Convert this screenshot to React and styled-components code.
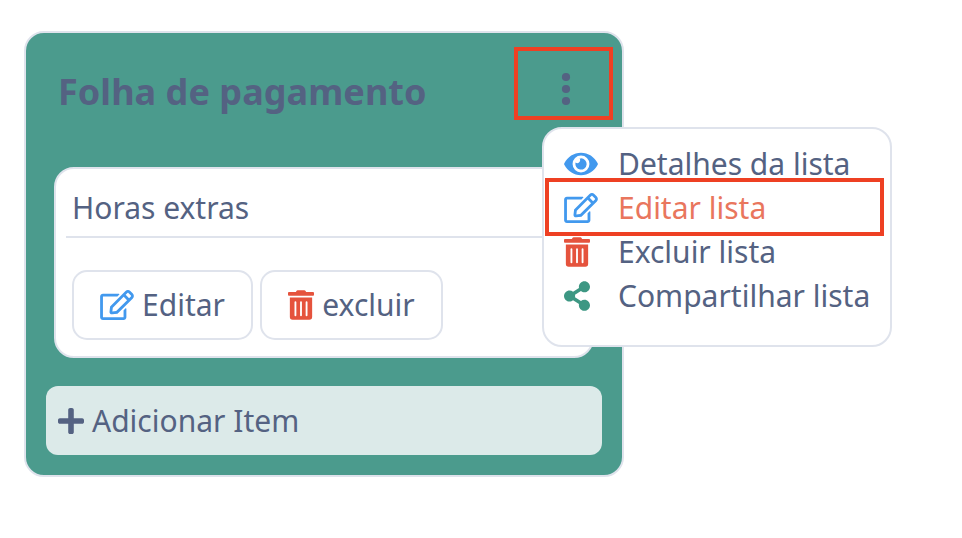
import React from "react";
import styled, { createGlobalStyle } from "styled-components";
import { FaEye, FaRegEdit, FaTrashAlt, FaShareAlt, FaPlus } from "react-icons/fa";

const ink = "#546282";
const line = "#dfe3ec";
const blue = "#4299ee";
const red = "#e5533d";
const green = "#3d9783";

const GlobalStyle = createGlobalStyle`
  *, *::before, *::after { box-sizing: border-box; }
  html, body { margin: 0; background: #fff; }
  body { font-family: "Noto Sans", sans-serif; font-size: 30px; color: ${ink}; overflow: hidden; }
`;

const Page = styled.main`
  position: relative;
  width: 962px;
  height: 538px;
  padding: 31px 24px;
`;

const Icon = styled.span`
  display: inline-flex;
  flex: none;
  color: ${(p) => p.$color || "inherit"};

  svg {
    display: block;
    width: ${(p) => p.$width}px;
    height: ${(p) => p.$height || 30}px;
  }
`;

const ListCard = styled.section`
  width: 600px;
  height: 446px;
  padding: 0 20px;
  border: 2px solid ${line};
  border-radius: 20px;
  background: #4b9b8d;
`;

const ListHeader = styled.header`
  display: flex;
  align-items: center;
  justify-content: space-between;
  height: 134px;
  padding: 0 30px 16px 12px;
`;

const ListTitle = styled.h1`
  margin: 0;
  font-size: 36px;
  font-weight: 700;
  line-height: 48px;
  letter-spacing: 0.05px;
  white-space: nowrap;
`;

const MenuTrigger = styled.button`
  display: flex;
  margin-top: -6px;
  padding: 0;
  border: 0;
  background: none;
  color: ${ink};
`;

const ItemCard = styled.article`
  width: 540px;
  height: 191px;
  margin-left: 8px;
  padding: 0 10px;
  border: 2px solid ${line};
  border-radius: 20px;
  background: #fff;
`;

const ItemTitle = styled.h2`
  height: 69px;
  margin: 0;
  padding: 17px 6px 0;
  border-bottom: 2px solid ${line};
  font-size: 30px;
  font-weight: 400;
  line-height: 44px;
`;

const ItemActions = styled.div`
  display: flex;
  gap: 7px;
  padding: 32px 6px 0;
`;

const ActionButton = styled.button`
  display: flex;
  align-items: center;
  justify-content: center;
  gap: 8px;
  width: ${(p) => p.$width}px;
  height: 70px;
  padding: 0 0 1px;
  border: 2px solid ${line};
  border-radius: 15px;
  background: #fff;
  color: ${ink};
  font: inherit;
  line-height: 40px;
  white-space: nowrap;
`;

const AddButton = styled.button`
  display: flex;
  align-items: center;
  gap: 8px;
  width: 556px;
  height: 69px;
  margin-top: 28px;
  padding: 0 12px;
  border: 0;
  border-radius: 12px;
  background: #dceae9;
  color: ${ink};
  font: inherit;
`;

const Menu = styled.ul`
  position: absolute;
  left: 542px;
  top: 127px;
  width: 350px;
  height: 220px;
  margin: 0;
  padding: 13px 0 0 20px;
  border: 2px solid ${line};
  border-radius: 20px;
  background: #fff;
  list-style: none;
`;

const MenuItem = styled.li`
  display: grid;
  grid-template-columns: 54px 1fr;
  align-items: center;
  height: 44px;
  line-height: 44px;
  color: ${(p) => (p.$active ? "#e9765d" : ink)};
  white-space: nowrap;
`;

const Highlight = styled.div`
  position: absolute;
  left: ${(p) => p.$x}px;
  top: ${(p) => p.$y}px;
  width: ${(p) => p.$w}px;
  height: ${(p) => p.$h}px;
  border: 4px solid #ee4023;
  pointer-events: none;
`;

const menuItems = [
  { Glyph: FaEye, width: 34, color: blue, label: "Detalhes da lista" },
  { Glyph: FaRegEdit, width: 34, color: blue, label: "Editar lista", active: true },
  { Glyph: FaTrashAlt, width: 26, color: red, label: "Excluir lista" },
  { Glyph: FaShareAlt, width: 26, color: green, label: "Compartilhar lista" },
];

function VerticalDots() {
  return (
    <svg viewBox="0 0 12 36" fill="currentColor">
      <circle cx="6" cy="6" r="4.1" />
      <circle cx="6" cy="18" r="4.1" />
      <circle cx="6" cy="30" r="4.1" />
    </svg>
  );
}

export default function App() {
  return (
    <>
      <GlobalStyle />
      <Page>
        <ListCard>
          <ListHeader>
            <ListTitle>Folha de pagamento</ListTitle>
            <MenuTrigger aria-label="Menu">
              <Icon $width={12} $height={36}>
                <VerticalDots />
              </Icon>
            </MenuTrigger>
          </ListHeader>
          <ItemCard>
            <ItemTitle>Horas extras</ItemTitle>
            <ItemActions>
              <ActionButton $width={181}>
                <Icon $width={34} $color={blue}>
                  <FaRegEdit />
                </Icon>
                Editar
              </ActionButton>
              <ActionButton $width={183}>
                <Icon $width={26} $color={red}>
                  <FaTrashAlt />
                </Icon>
                excluir
              </ActionButton>
            </ItemActions>
          </ItemCard>
          <AddButton>
            <Icon $width={26}>
              <FaPlus />
            </Icon>
            Adicionar Item
          </AddButton>
        </ListCard>
        <Menu>
          {menuItems.map(({ Glyph, width, color, label, active }) => (
            <MenuItem key={label} $active={active}>
              <Icon $width={width} $color={color}>
                <Glyph />
              </Icon>
              {label}
            </MenuItem>
          ))}
        </Menu>
        <Highlight $x={514} $y={47} $w={99} $h={73} />
        <Highlight $x={545} $y={178} $w={339} $h={58} />
      </Page>
    </>
  );
}
